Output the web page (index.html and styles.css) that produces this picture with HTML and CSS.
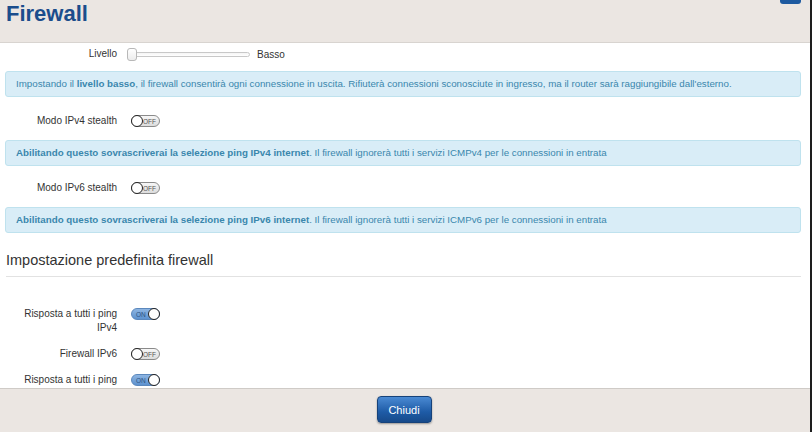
FILE: index.html
```html
<!DOCTYPE html>
<html lang="it">
<head>
  <meta charset="UTF-8">
  <title>Firewall</title>
  <link rel="stylesheet" href="styles.css">
</head>
<body>
  <div class="modal">
    <!-- Header -->
    <div class="modal-header">
      <h1 class="modal-title">Firewall</h1>
      <span class="header-btn"></span>
    </div>

    <!-- Scrolling body -->
    <div class="modal-body">
      <div class="row row-level">
        <div class="label">Livello</div>
        <div class="slider"><span class="slider-thumb"></span></div>
        <div class="level-text">Basso</div>
      </div>
      <div class="info">Impostando il <b>livello basso</b>, il firewall consentirà ogni connessione in uscita. Rifiuterà connessioni sconosciute in ingresso, ma il router sarà raggiungibile dall'esterno.</div>

      <div class="row row-stealth">
        <div class="label">Modo IPv4 stealth</div>
        <div class="toggle off"><span class="knob"></span><span class="txt">OFF</span></div>
      </div>
      <div class="info"><b>Abilitando questo sovrascriverai la selezione ping IPv4 internet</b>. Il firewall ignorerà tutti i servizi ICMPv4 per le connessioni in entrata</div>

      <div class="row row-stealth">
        <div class="label">Modo IPv6 stealth</div>
        <div class="toggle off"><span class="knob"></span><span class="txt">OFF</span></div>
      </div>
      <div class="info"><b>Abilitando questo sovrascriverai la selezione ping IPv6 internet</b>. Il firewall ignorerà tutti i servizi ICMPv6 per le connessioni in entrata</div>

      <h2 class="section-title">Impostazione predefinita firewall</h2>

      <div class="defaults">
        <div class="row">
          <div class="label">Risposta a tutti i ping IPv4</div>
          <div class="toggle on"><span class="txt">ON</span><span class="knob"></span></div>
        </div>
        <div class="row">
          <div class="label">Firewall IPv6</div>
          <div class="toggle off"><span class="knob"></span><span class="txt">OFF</span></div>
        </div>
        <div class="row">
          <div class="label">Risposta a tutti i ping IPv6</div>
          <div class="toggle on"><span class="txt">ON</span><span class="knob"></span></div>
        </div>
      </div>
    </div>

    <!-- Footer -->
    <div class="modal-footer">
      <button class="btn-primary">Chiudi</button>
    </div>
  </div>
</body>
</html>
```

FILE: styles.css
```css
/* Reset */
* { margin: 0; padding: 0; box-sizing: border-box; }
html, body {
  height: 100%;
  overflow: hidden;
  font-family: "Liberation Sans", Arial, sans-serif;
  font-size: 10px;
  color: #333;
  background: #fff;
}

/* Modal frame */
.modal {
  height: 432px;
  display: flex;
  flex-direction: column;
  border-right: 2px solid #1e1e1e;
}

/* Header */
.modal-header {
  height: 43px;
  flex: none;
  display: flex;
  justify-content: space-between;
  align-items: flex-start;
  background: #ebe6e2;
  border-bottom: 1px solid #d8d4d0;
  padding: 0 8px 0 6px;
}
.modal-title {
  font-size: 22px;
  font-weight: bold;
  color: #1b4d8c;
  line-height: 27px;
}
.header-btn {
  width: 21px;
  height: 4px;
  background: #1d5aa0;
  border-radius: 0 0 3px 3px;
  margin-right: 1px;
}

/* Body */
.modal-body {
  flex: 1;
  overflow: hidden;
  padding: 0 9px 0 5px;
}

.row {
  display: flex;
  align-items: center;
  gap: 14px;
}
.label {
  width: 112px;
  text-align: right;
  line-height: 14px;
  color: #333;
}

.row-level {
  height: 22px;
  margin-bottom: 6px;
  gap: 10px;
}
.slider {
  position: relative;
  width: 123px;
  height: 5px;
  border: 1px solid #c8c8c8;
  border-radius: 3px;
  background: linear-gradient(#f4f4f4, #ffffff);
}
.slider-thumb {
  position: absolute;
  left: -1px;
  top: -5px;
  width: 10px;
  height: 13px;
  border: 1px solid #b8b8b8;
  border-radius: 3px;
  background: linear-gradient(#ffffff, #ececec);
}
.level-text { margin-left: -3px; }

/* Info boxes */
.info {
  background: #d9edf7;
  border: 1px solid #bfe2ee;
  border-radius: 3px;
  color: #3a87ad;
  padding: 6px 10px;
  line-height: 12px;
  font-size: 9.75px;
}
.info b { font-weight: bold; }

.row-stealth {
  height: 22px;
  margin: 13px 0 8px;
}
.row-stealth + .info + .row-stealth { margin-top: 11px; }

/* Toggle switch */
.toggle {
  width: 29px;
  height: 12px;
  border-radius: 7px;
  display: flex;
  align-items: center;
  justify-content: space-between;
  font-size: 6.5px;
  flex: none;
}
.toggle.off {
  border: 1px solid #8a8a8a;
  background: linear-gradient(#f7f7f7, #dcdcdc);
  color: #555;
  padding-right: 3px;
}
.toggle.on {
  border: 1px solid #5b88bd;
  background: linear-gradient(#8db5e2, #5d92cf);
  color: #2b5384;
  padding-left: 4px;
}
.toggle .knob {
  width: 12px;
  height: 12px;
  margin: -1px;
  border-radius: 50%;
  background: #fff;
  border: 1px solid #222;
}

/* Section */
.section-title {
  font-size: 14.5px;
  font-weight: normal;
  color: #333;
  line-height: 18px;
  margin: 18px 0 0 1px;
  padding-bottom: 7px;
  border-bottom: 1px solid #e2e2e2;
}
.defaults { padding-top: 24px; }
.defaults .row {
  align-items: flex-start;
  padding: 6px 0;
}
.defaults .toggle { margin-top: 1px; }

/* Footer */
.modal-footer {
  height: 44px;
  flex: none;
  background: #ebe6e2;
  border-top: 1px solid #cfcbc7;
  display: flex;
  justify-content: center;
  align-items: center;
  padding-bottom: 2px;
}
.btn-primary {
  width: 55px;
  height: 27px;
  font-family: "Liberation Sans", Arial, sans-serif;
  font-size: 11px;
  color: #fff;
  background: linear-gradient(#4a8ad3, #1e5ba6 60%, #174a8a);
  border: 1px solid #16427a;
  border-radius: 4px;
  box-shadow: 0 1px 2px rgba(0, 0, 0, 0.35);
  margin-left: -2px;
}
```
